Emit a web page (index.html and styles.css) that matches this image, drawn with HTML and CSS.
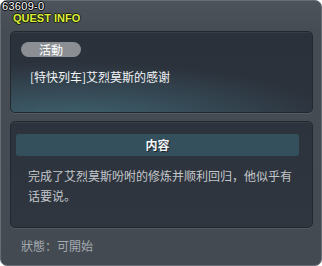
FILE: index.html
```html
<!DOCTYPE html>
<html lang="zh">
<head>
<meta charset="utf-8">
<link rel="stylesheet" href="styles.css">
</head>
<body>
<div class="window">
  <div class="quest-id">63609-0</div>
  <div class="title">QUEST INFO</div>
  <section class="box box-head">
    <span class="pill">活動</span>
    <div class="qname">[特快列车]艾烈莫斯的感谢</div>
  </section>
  <section class="box box-body">
    <div class="bar">内容</div>
    <p class="desc">完成了艾烈莫斯吩咐的修炼并顺利回归，他似乎有话要说。</p>
  </section>
  <div class="status">狀態：可開始</div>
</div>
</body>
</html>
```
FILE: styles.css
```css
* { box-sizing: border-box; }
html, body { margin: 0; padding: 0; background: #ffffff; }
body { width: 322px; height: 266px; overflow: hidden; }

.window {
  position: relative;
  width: 322px;
  height: 266px;
  border: 1px solid #666d75;
  border-radius: 7px;
  background: linear-gradient(to bottom, #4c535b 0px, #454c54 30px, #434a52 100%);
  padding: 10px 8px 0 9px;
  display: flex;
  flex-direction: column;
  font-family: "Noto Sans CJK SC", "Noto Sans", sans-serif;
}

.quest-id {
  position: absolute;
  left: 1px;
  top: 0px;
  font-family: "Liberation Sans", Arial, sans-serif;
  font-size: 11px;
  line-height: 10px;
  height: 10px;
  color: #ffffff;
  letter-spacing: 0.3px;
  text-shadow: -1px 0 #000, 1px 0 #000, 0 -1px #000, 0 1px #000;
}

.title {
  font-family: "Liberation Sans", Arial, sans-serif;
  font-weight: bold;
  font-size: 11px;
  line-height: 10px;
  height: 10px;
  margin-top: 2px;
  padding-left: 3px;
  color: #dcef3a;
  text-shadow: -1px 0 #1a1d10, 1px 0 #1a1d10, 0 -1px #1a1d10, 0 1px #1a1d10;
  margin-bottom: 8px;
}

.box {
  width: 303px;
  border: 1px solid #23282f;
  border-radius: 5px;
  box-shadow: inset 0 1px 0 rgba(255,255,255,0.06), 0 1px 0 rgba(255,255,255,0.08);
}

.box-head {
  height: 82px;
  padding: 10px 10px 0 10px;
  background:
    radial-gradient(ellipse 260px 60px at 60px 90px, rgba(70,115,130,0.75), rgba(70,115,130,0) 100%),
    linear-gradient(to bottom, #2b313b, #2c333d);
}

.pill {
  display: flex;
  align-items: center;
  justify-content: center;
  width: 60px;
  height: 15px;
  border-radius: 8px;
  background: #8b8f94;
  color: #ffffff;
  font-size: 12px;
  line-height: 15px;
}

.qname {
  margin-top: 12px;
  padding-left: 9px;
  color: #f2f4f6;
  font-size: 12px;
  line-height: 16px;
}

.box-body {
  margin-top: 8px;
  height: 107px;
  padding: 12px 13px 0 5px;
  background: linear-gradient(to bottom, #2d333c, #30363f);
}

.bar {
  height: 22px;
  border-radius: 3px;
  background: #34505d;
  color: #f4f6f8;
  font-size: 12px;
  font-weight: bold;
  line-height: 22px;
  text-align: center;
  text-shadow: 1px 1px 0 #1a2228;
}

.desc {
  margin: 10px 0 0 0;
  padding-left: 12px;
  width: 282px;
  color: #c3c7cb;
  font-size: 12px;
  line-height: 20px;
}

.status {
  margin-top: 10px;
  padding-left: 11px;
  color: #a6abb0;
  font-size: 12px;
  line-height: 16px;
  font-family: "Noto Sans CJK TC", "Noto Sans CJK SC", sans-serif;
}
```
